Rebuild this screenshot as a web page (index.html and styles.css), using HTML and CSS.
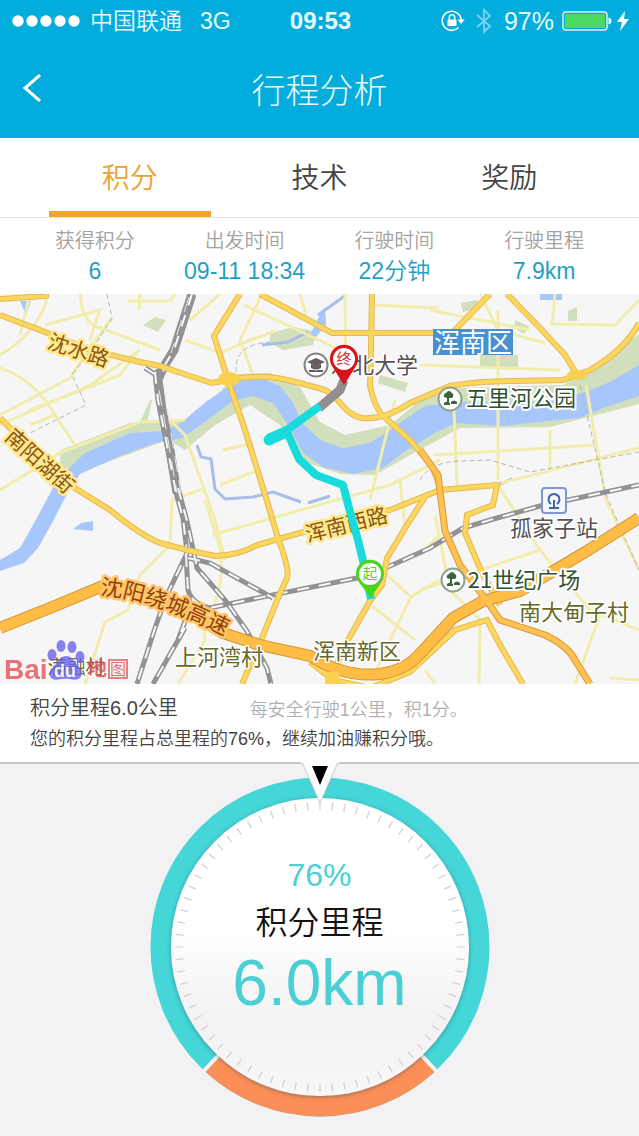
FILE: index.html
```html
<!DOCTYPE html>
<html lang="zh-CN">
<head>
<meta charset="utf-8">
<meta name="viewport" content="width=device-width, initial-scale=1">
<title>行程分析</title>
<link rel="stylesheet" href="styles.css">
</head>
<body>
<header class="top">
  <div class="status">
    <div class="status-left">
      <svg class="signal" viewBox="0 0 68 12" aria-hidden="true"><circle cx="6" cy="6" r="5.7"/><circle cx="20" cy="6" r="5.7"/><circle cx="34" cy="6" r="5.7"/><circle cx="48" cy="6" r="5.7"/><circle cx="62" cy="6" r="5.7"/></svg>
      <span class="carrier">中国联通</span>
      <span>3G</span>
    </div>
    <span class="clock">09:53</span>
    <div class="status-right">
      <svg class="lock" viewBox="0 0 24 22" aria-hidden="true"><path d="M17.500 17.500A9.500 9.500 0 1 1 20.200 10" fill="none" stroke="#fff" stroke-width="1.600"/><path d="M16.500 9.500h7.200l-3.600 4.500z"/><rect x="6.500" y="9.500" width="9" height="6.500" rx=".6"/><path d="M8.300 9.500V7.500a2.700 2.700 0 0 1 5.400 0v2" fill="none" stroke="#fff" stroke-width="1.500"/></svg>
      <svg class="bluetooth" viewBox="0 0 16 26" aria-hidden="true"><path d="M1 7l13 11-6 6V2l6 6L1 19" fill="none" stroke="#7fd3f2" stroke-width="1.800"/></svg>
      <span class="percent">97%</span>
      <svg class="battery" viewBox="0 0 50 20" aria-hidden="true"><rect x="1" y="1" width="44" height="18" rx="3" fill="none" stroke="#d8f3fc" stroke-width="1.500"/><rect x="3" y="3" width="40" height="14" rx="1" fill="#4cd964"/><path d="M46.500 6.500c4 1 4 6 0 7z"/></svg>
      <svg class="bolt" viewBox="0 0 12 20" aria-hidden="true"><path d="M8 0L0 11h5L3 20l9-12H7z"/></svg>
    </div>
  </div>
  <div class="nav">
    <button class="back" type="button" aria-label="返回"><svg viewBox="0 0 20 28" aria-hidden="true"><path d="M18 1L3 14l15 13" fill="none" stroke="#fff" stroke-width="3"/></svg></button>
    <h1 class="title">行程分析</h1>
  </div>
</header>

<main class="page">
  <div class="tabs" role="tablist">
    <button class="tab tab-active" type="button" role="tab" aria-selected="true">积分</button>
    <button class="tab" type="button" role="tab" aria-selected="false">技术</button>
    <button class="tab" type="button" role="tab" aria-selected="false">奖励</button>
  </div>

  <dl class="stats">
    <div class="stat"><dt>获得积分</dt><dd>6</dd></div>
    <div class="stat"><dt>出发时间</dt><dd>09-11 18:34</dd></div>
    <div class="stat"><dt>行驶时间</dt><dd>22分钟</dd></div>
    <div class="stat"><dt>行驶里程</dt><dd>7.9km</dd></div>
  </dl>

  <svg class="map" viewBox="0 294 639 390" role="img" aria-label="行程地图">
    <defs>
      <path id="majors" d="M0 315L40 330 90 350 140 362 160 366 190 376 212 383 228 380C270 372 290 380 325 390C340 397 344 415 362 418Q385 420 410 403L450 386Q480 381 513 381L563 380 590 370Q625 350 639 323
        M240 294L214 336 228 380 245 430 263 488 278 538Q290 570 287 578L278 598 262 638 242 684
        M260 294L332 333H452L490 294
        M372 294L371 350 370 386Q374 405 382 415L410 440 432 466 441 490
        M507 294L540 328 565 355 577 375
        M0 418L20 438 70 485 110 510Q140 535 160 543L187 550 215 556Q240 555 257 545L307 531 390 510 440 490 497 485 493 505 467 515 465 533 482 573 500 605
        M425 497L407 525 387 558 382 585 370 601 348 640 335 668
        M310 662L333 680 370 688 410 672 455 630 487 620 500 645 523 684
        M0 299L46 296 47 290"/>
      <path id="highway" d="M0 628L50 608 103 586 150 594 195 615 223 633 260 645 310 656Q345 678 380 674 405 670 418 656L453 618 483 601 520 591 587 551 639 518"/>
      <path id="ramp" d="M420 450L438 475 445 531 460 565 487 601 500 620 545 635Q568 646 575 660L590 684"/>
      <path id="rails" d="M192 294L182 325 174 350 163 368 155 373 158 400 166 440 176 493 183 518 187 553 167 595 155 628 137 684
        M178 488L187 521 197 568 225 600 247 631 267 668 271 684
        M186 555L188 590Q192 604 210 608L243 601 357 578 390 566 430 548 463 528 497 518 540 506 587 496 639 485
        M188 558L210 563 273 598M185 628L153 684M193 600L178 640M145 368L158 376 166 368"/>
      <g id="tree"><circle r="11.500" fill="#fff" stroke="#8ba28b" stroke-width="2"/><path d="M-6-2a3 3 0 0 1 2-4q3-4 6 0a3 3 0 0 1 0 5h-3v4h-2v-4zM-6 4q3-3 6 0v2h-6zM1 3q3-3 6 0v2H1z"/></g>
    </defs>
    <rect y="294" width="639" height="390" fill="#f7f6f6"/>

    <g fill="#d2dfbc">
      <path d="M61 450L130 423 195 421 235 374 270 373 300 387 320 422 345 435 390 425 425 396 460 388 563 385 610 355 639 334V404L550 427 460 428 410 455 375 475 340 474 300 460 280 425 250 405 215 425 185 450 168 440 80 472 57 500z"/>
      <path d="M270 333l24-6 23 5-4 13-30 5-13-7zM143 325l12-8 11 3-8 12zM480 355h38v12h-38zM568 311l9-4v14h-9zM461 303l16-3 3 9-17 3zM380 375l28 8-3 9-27-9zM515 320l14 6-5 8-10-6zM150 400l-10 22 7 2 5-24z"/>
    </g>
    <g fill="#a7c6fb">
      <path d="M0 560L20 548 38 516 57 480 85 453 130 433 165 431 182 422 207 401 237 381 260 378 280 386 293 403 302 423 322 441 343 448 370 443 390 430 407 418 425 406 440 404 465 402 520 403 563 400 590 390 610 382 639 365V396L603 408 580 418 547 421 503 426 455 423 435 433 407 450 383 468 353 474 323 467 303 453 290 428 273 403 253 396 233 401 205 422 182 438 155 443 120 456 80 474 68 492 52 523 38 548 24 563 0 571z"/>
      <path d="M20 301h11l-5 14zM73 529l8-6 12-2v10zM310 335l9-18 6-10 1 18-10 12zM540 294h22v6h-22z"/>
    </g>
    <path d="M197 445l4 12 10 2 4 30 10 10 28-2 20-5 28 10M308 503l22-7M262 345l26-3 20-10M318 315l28-20M498 485l14-6" fill="none" stroke="#a7bdea" stroke-width="3"/>

    <g fill="none" stroke="#f0edad" stroke-width="3">
      <path d="M0 368Q35 380 55 415L75 445M0 355Q35 335 47 300M45 325L100 310 90 340M80 294Q82 320 95 326L160 350M140 294L139 310M128 301L170 301 175 294M185 340L220 353 255 338M0 415L70 378 92 345 112 318M0 425L90 385 140 350M30 410L120 375 139 350M55 415L30 425M220 294L190 320M239 345L275 331M0 490L62 452 140 422 185 420M165 415L185 435 215 520 225 560M30 294L20 335"/>
      <path d="M244 305L340 350M262 294L240 340 253 375M300 294L306 315M345 294L346 385M372 305L439 308M223 450L253 443M212 535L390 485 440 460M220 555Q225 580 212 610M205 488L172 500 170 545 140 575 128 610 105 622 85 684M205 500L222 555M220 485L258 470M395 400L370 500M400 480L405 525"/>
      <path d="M420 365L560 370M454 410L457 485M498 310V480M550 430V470M434 455L595 445M497 484L639 448M555 294L552 324 615 325 639 300M480 294L498 330 545 343M430 310L530 330M586 385L606 500 639 570M497 484L540 550 590 610 639 630M420 590L540 550M435 515L450 590 480 620 479 684M425 670L435 684M420 555L439 535M600 615L575 684M610 678L639 680M387 575L411 597 390 640 372 680M411 597L439 580M372 606L415 640M200 600L205 640 178 684"/>
    </g>
    <path d="M107 294L112 318 95 345 72 375 86 405 30 433M420 480Q430 462 460 461L490 460 530 472 639 452M580 385L606 495 639 570M238 380Q228 345 270 342" fill="none" stroke="#b6b6ba" stroke-width="1" stroke-dasharray="5 3"/>

    <use href="#rails" fill="none" stroke="#929295" stroke-width="5"/>
    <path d="M192 294L182 325 174 350 163 368 158 380 162 410 170 450 177 493" fill="none" stroke="#929295" stroke-width="9"/>
    <use href="#rails" fill="none" stroke="#f8f8f8" stroke-width="2" stroke-dasharray="12 10"/>
    <path d="M189 297L179 328 171 353M159 390L168 440 177 493M164 385L172 440 181 493" fill="none" stroke="#e8e8ea" stroke-width="1" stroke-dasharray="16 8"/>

    <use href="#majors" fill="none" stroke="#e3b857" stroke-width="6"/>
    <use href="#majors" fill="none" stroke="#fdd65c" stroke-width="4"/>
    <use href="#ramp" fill="none" stroke="#d79a3a" stroke-width="7"/>
    <use href="#highway" fill="none" stroke="#cf9335" stroke-width="12"/>
    <use href="#highway" fill="none" stroke="#ffbd45" stroke-width="10"/>
    <use href="#ramp" fill="none" stroke="#ffc252" stroke-width="5"/>
    <path d="M325 672h14v16h-14z" fill="#fdd04f"/>
    <ellipse cx="229" cy="379" rx="11" ry="7" fill="#fad050"/>
    <ellipse cx="577" cy="375" rx="10" ry="5" fill="#fad050"/>

    <g class="road-label">
      <text transform="translate(79 349) rotate(18)">沈水路</text>
      <text transform="translate(41 460) rotate(42)">南阳湖街</text>
      <text transform="translate(346 523) rotate(-14)">浑南西路</text>
    </g>
    <path id="ring-curve" d="M100 595Q150 597 235 641" fill="none"/>
    <text class="ring-label"><textPath href="#ring-curve">沈阳绕城高速</textPath></text>

    <text class="place-grey" x="374" y="373">东北大学</text>
    <circle cx="316" cy="365" r="11.500" fill="#fff" stroke="#8a8182" stroke-width="2"/>
    <path d="M316 358l9 4-9 4-9-4zM311 364v4q5 3 10 0v-4l-5 2zM309 370h6l1 1 1-1h6v2h-14z" fill="#675d5e"/>

    <g fill="none" stroke-linejoin="round">
      <path d="M344 380L340 390 319 408" stroke="#918d90" stroke-width="9"/>
      <path d="M320 406L287 430 268 438" stroke="#19dbdc" stroke-width="8"/>
      <path d="M286 432L269 440" stroke="#19dbdc" stroke-width="11" stroke-linecap="round"/>
      <path d="M287 432L299 459 316 475 343 485 349 508 358 540 364 565 371 599" stroke="#19dbdc" stroke-width="8"/>
    </g>
    <path d="M332 366A14 14 0 1 1 356 366L344 385z" fill="#da1219"/>
    <circle cx="344" cy="359" r="11" fill="#fff"/>
    <text class="pin-text pin-end" x="344" y="364">终</text>
    <path d="M358 581A14 14 0 1 1 382 581L371 598z" fill="#48d61c"/>
    <circle cx="370" cy="574" r="11" fill="#fff"/>
    <text class="pin-text pin-start" x="370" y="579">起</text>

    <rect x="433" y="329" width="80" height="26" fill="#4791d2"/>
    <text class="district" x="473" y="352">浑南区</text>

    <use href="#tree" x="450" y="399" fill="#3c6340"/>
    <use href="#tree" x="453" y="580" fill="#3c6340"/>
    <text class="place-green" x="521" y="406">五里河公园</text>
    <text class="place-green" x="524" y="588">21世纪广场</text>

    <rect x="542" y="488" width="24" height="25" rx="3" fill="#f4f7fd" stroke="#7e97cf" stroke-width="2"/>
    <path d="M551 504a5.500 5.500 0 1 1 6 0M554 500v7M549 508h10" fill="none" stroke="#3f64ad" stroke-width="2"/>
    <text class="place-grey" x="554" y="536">孤家子站</text>

    <g class="village">
      <text x="574" y="620">南大甸子村</text>
      <text x="357" y="659">浑南新区</text>
      <text x="219" y="665">上河湾村</text>
      <text class="village-small" x="76" y="674">满融村</text>
    </g>
    <g opacity=".8">
      <text class="baidu" x="4" y="679">Bai</text>
      <g fill="#6c65ee"><ellipse cx="61" cy="646" rx="4.500" ry="6"/><ellipse cx="72" cy="647" rx="4.500" ry="6"/><ellipse cx="52" cy="655" rx="4.500" ry="6"/><ellipse cx="80" cy="657" rx="4.500" ry="6"/><path d="M66 656C59 656 58 663 53 667C46 675 51 681 58 679.500Q66 678 73 679.500C82 681 84 673 79 667C74 662 73 656 66 656z"/></g>
      <text class="baidu-du" x="65" y="677">du</text>
      <text class="baidu-map" x="87" y="676">地</text>
      <rect x="109" y="660" width="18" height="18" fill="none" stroke="#e4636a" stroke-width="2"/>
      <text class="baidu-map baidu-tu" x="110" y="675">图</text>
    </g>
  </svg>

  <section class="summary">
    <div class="summary-row">
      <h2 class="summary-title">积分里程6.0公里</h2>
      <p class="summary-rule">每安全行驶1公里，积1分。</p>
    </div>
    <p class="summary-text">您的积分里程占总里程的76%，继续加油赚积分哦。</p>
  </section>

  <section class="gauge">
    <svg class="dial" viewBox="0 0 340 356" aria-hidden="true">
      <defs>
        <linearGradient id="face" x1="0" y1="0" x2="0" y2="1"><stop offset="0" stop-color="#fff"/><stop offset=".45" stop-color="#fff"/><stop offset=".75" stop-color="#f2f1f3"/><stop offset="1" stop-color="#f8f8f9"/></linearGradient>
        <filter id="soft" x="-10%" y="-10%" width="120%" height="120%"><feDropShadow dx="0" dy="1" stdDeviation="2" flood-color="#245" flood-opacity=".5"/></filter>
      </defs>
      <circle cx="170" cy="185" r="159" fill="none" stroke="#45d6d8" stroke-width="21"/>
      <circle cx="170" cy="185" r="159" fill="none" stroke="#fc8e58" stroke-width="21" pathLength="100" stroke-dasharray="24 76" stroke-dashoffset="-13"/>
      <path d="M170 185L50 313M170 185L290 313" stroke="#f6f3f1" stroke-width="4"/>
      <circle cx="170" cy="185" r="149" fill="url(#face)" filter="url(#soft)"/>
      <circle cx="170" cy="185" r="141" fill="none" stroke="#d2cfd3" stroke-width="8" pathLength="720" stroke-dasharray="1 9" stroke-dashoffset=".5"/>
      <path d="M152 0L170 41 188 0z" fill="#fff" stroke="#c9c9cc" stroke-width="1"/>
      <path d="M151 -1h38v2h-38z" fill="#fff"/>
      <path d="M162 4h16l-8 19z" fill="#000"/>
    </svg>
    <div class="reading">
      <p class="reading-percent">76%</p>
      <p class="reading-label">积分里程</p>
      <p class="reading-value">6.0km</p>
    </div>
  </section>
</main>
</body>
</html>
```
FILE: styles.css
```css
* { box-sizing: border-box; }

body, h1, h2, p, dl, dd { margin: 0; }

body {
  min-height: 100vh;
  background: #f2f1f3;
  color: #444;
  font-family: "Liberation Sans", "Noto Sans CJK SC", sans-serif;
  font-weight: 350;
}

button {
  padding: 0;
  border: 0;
  background: none;
  color: inherit;
  font: inherit;
  cursor: pointer;
}

svg { display: block; }

/* Header */
.top {
  background: #02addd;
  color: #e8fbff;
}

.status {
  display: grid;
  grid-template-columns: 1fr auto 1fr;
  align-items: center;
  height: 42px;
  padding: 0 10px 0 12px;
  font-size: 23px;
  line-height: 42px;
}

.status svg { fill: #fff; }

.status-left,
.status-right {
  display: flex;
  align-items: center;
}

.status-right { justify-content: flex-end; }

.signal { width: 68px; height: 12px; }
.carrier { margin: 0 18px 0 10px; }
.clock { font-size: 24px; font-weight: 700; }
.lock { width: 24px; height: 22px; }
.bluetooth { width: 16px; height: 26px; margin: 0 12px 0 11px; }
.percent { font-size: 25px; }
.battery { width: 50px; height: 20px; margin: 0 5px 0 8px; }
.bolt { width: 12px; height: 20px; }

.nav {
  display: grid;
  grid-template-columns: 64px 1fr 64px;
  align-items: center;
  height: 96px;
  padding-bottom: 4px;
}

.back {
  display: grid;
  place-items: center;
  height: 64px;
}

.back svg { width: 20px; height: 28px; }

.title {
  font-size: 34px;
  font-weight: 300;
  text-align: center;
}

/* Tabs */
.tabs {
  display: grid;
  grid-template-columns: repeat(3, 1fr);
  height: 80px;
  padding: 0 35px;
  border-bottom: 1px solid #e4e4e4;
  background: #fff;
}

.tab {
  position: relative;
  padding-bottom: 4px;
  font-size: 28px;
}

.tab-active { color: #f0a030; }

.tab-active::after {
  content: "";
  position: absolute;
  right: 14px;
  bottom: 0;
  left: 14px;
  height: 6px;
  background: #f1a32c;
}

/* Trip figures */
.stats {
  display: grid;
  grid-template-columns: repeat(4, 1fr);
  padding: 8px 20px;
  background: #fff;
  line-height: 30px;
  text-align: center;
  white-space: nowrap;
}

.stat dt {
  color: #a3a3a3;
  font-size: 20px;
}

.stat dd {
  color: #1f9fc4;
  font-size: 23px;
}

/* Map */
.map {
  width: 100%;
  font-family: "Noto Sans CJK SC", sans-serif;
  font-weight: 400;
}

.map text {
  font-size: 22px;
  text-anchor: middle;
  paint-order: stroke;
  stroke-linejoin: round;
}

.map .road-label text {
  fill: #8b5713;
  font-size: 21px;
  stroke: #ffe98c;
  stroke-width: 5px;
  dominant-baseline: central;
}

.map .ring-label {
  fill: #93400b;
  stroke: #ffc669;
  stroke-width: 5px;
  text-anchor: start;
}

.map .place-grey {
  fill: #585255;
  stroke: #fff;
  stroke-width: 3px;
}

.map .place-green {
  fill: #2f5234;
  stroke: #fff;
  stroke-width: 4px;
}

.map .village text {
  fill: #66692b;
  stroke: #fff;
  stroke-width: 3px;
}

.map .village .village-small { font-size: 19px; }

.map .district {
  fill: #fff;
  font-size: 26px;
}

.map .pin-text { font-size: 15px; }
.map .pin-end { fill: #dc2c30; }
.map .pin-start { fill: #58cf3a; }

.map .baidu {
  fill: #e4535b;
  font-family: "Liberation Sans", sans-serif;
  font-size: 28px;
  font-weight: 700;
}

.map .baidu-du {
  fill: #fff;
  font-family: "Liberation Sans", sans-serif;
  font-size: 18px;
  font-weight: 700;
}

.map .baidu-map {
  fill: #df4a50;
  font-size: 20px;
  font-weight: 700;
}

.map .baidu,
.map .baidu-map { text-anchor: start; }

.map .baidu-tu {
  font-size: 16px;
  font-weight: 400;
}

/* Summary */
.summary {
  padding: 8px 30px;
  border-bottom: 2px solid #c9c9cc;
  background: #fff;
}

.summary-row {
  display: flex;
  align-items: center;
  gap: 72px;
}

.summary-title {
  font-size: 20px;
  font-weight: 350;
  line-height: 32px;
}

.summary-rule {
  color: #b0b0b0;
  font-size: 18px;
}

.summary-text {
  font-size: 18px;
  line-height: 30px;
}

/* Gauge */
.gauge {
  display: grid;
  justify-items: center;
  margin-top: -2px;
}

.dial,
.reading { grid-area: 1 / 1; }

.dial {
  width: 340px;
  max-width: 100%;
  overflow: visible;
}

.reading {
  padding-top: 93px;
  color: #4ad0d4;
  text-align: center;
}

.reading-percent {
  font-size: 32px;
  line-height: 40px;
}

.reading-label {
  color: #111;
  font-size: 32px;
  line-height: 56px;
}

.reading-value {
  font-size: 64px;
  line-height: 64px;
}
```
